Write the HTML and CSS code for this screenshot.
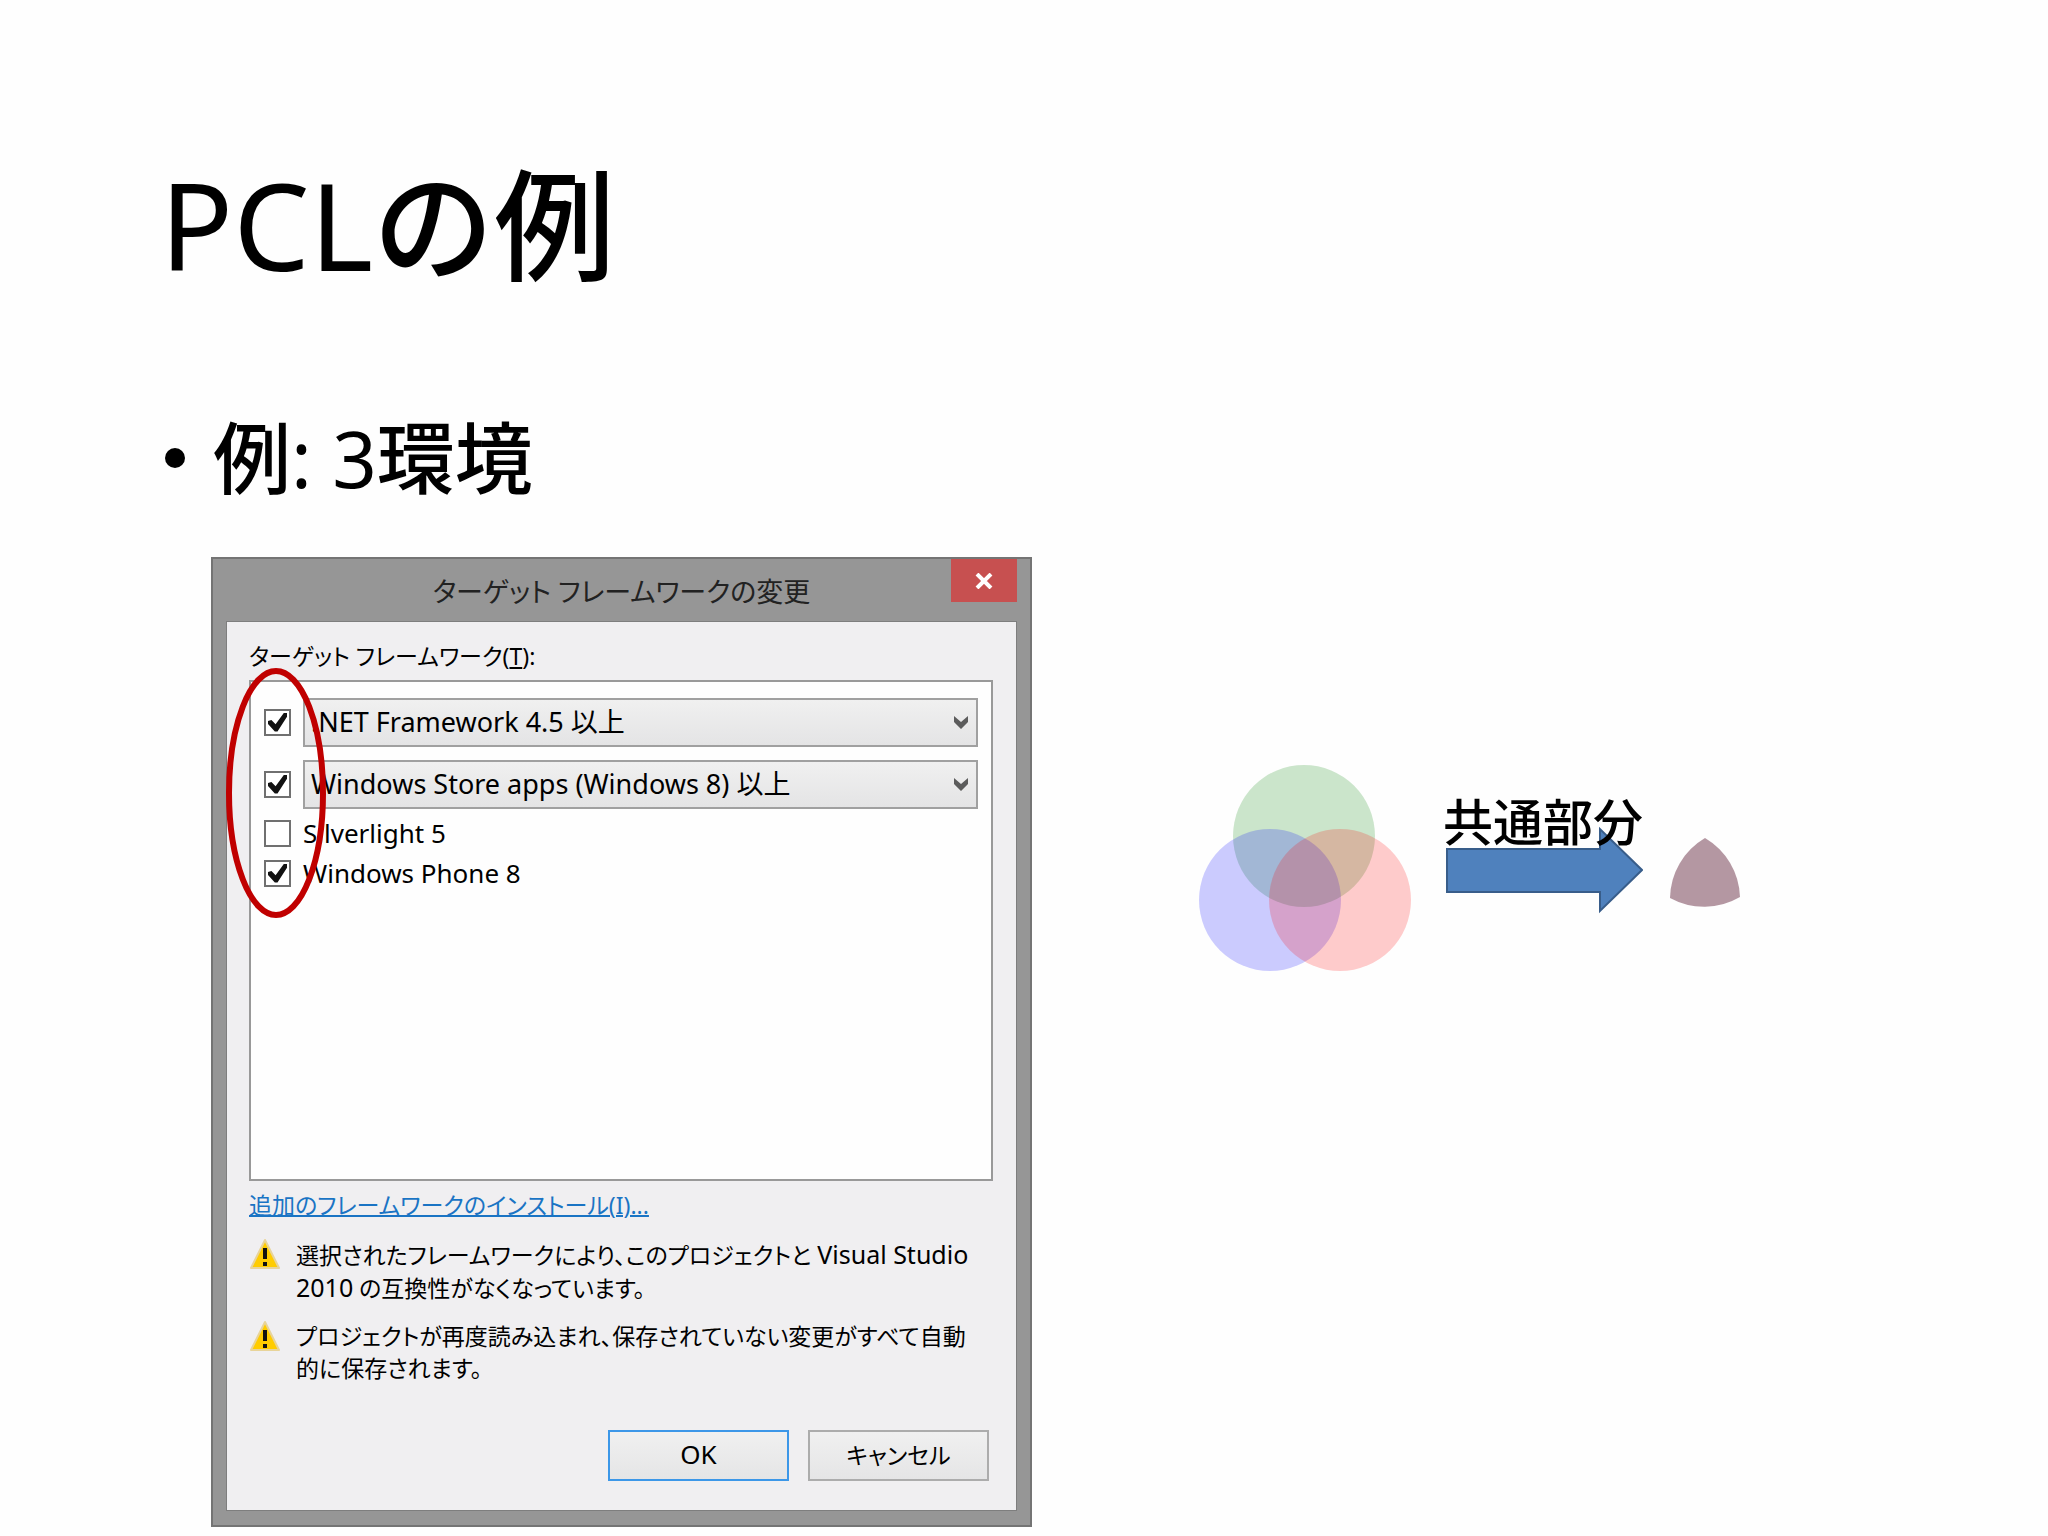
FILE: index.html
```html
<!DOCTYPE html>
<html lang="ja">
  <head>
    <meta charset="UTF-8" />
    <meta name="viewport" content="width=device-width, initial-scale=1.0" />
    <title>PCLの例</title>
    <link rel="stylesheet" href="styles.css">
  </head>
  <body>
    <main class="slide">
      <h1>PCL<span class="kanji">の例</span></h1>

      <ul class="points">
        <li><span><span class="kanji">例</span>: 3<span class="kanji">環境</span></span></li>
      </ul>

      <div class="content">
        <section class="dialog" aria-labelledby="dialog-title">
          <header class="titlebar">
            <h2 id="dialog-title">ターゲット フレームワークの変更</h2>
            <button type="button" class="close-btn" aria-label="閉じる">
              <svg viewBox="0 0 18 16" width="18" height="16">
                <path d="M2 1L16 15M16 1L2 15" stroke="#fff" stroke-width="4" fill="none" />
              </svg>
            </button>
          </header>

          <form class="client">
            <p class="list-label" id="list-label">ターゲット フレームワーク(<u>T</u>):</p>

            <div class="framework-list" role="group" aria-labelledby="list-label">
              <div class="row row-combo">
                <input type="checkbox" id="net" aria-label=".NET Framework" checked />
                <div class="combo">
                  <select id="net-version" aria-label=".NET Framework のバージョン">
                    <option>.NET Framework 4.5 以上</option>
                  </select>
                  <svg viewBox="0 0 16 13" width="16" height="13">
                    <path d="M1 0L8 6L15 0V6L8 13L1 6Z" fill="#5c5c5c" />
                  </svg>
                </div>
              </div>
              <div class="row row-combo">
                <input type="checkbox" id="store" aria-label="Windows Store apps" checked />
                <div class="combo">
                  <select id="store-version" aria-label="Windows Store apps のバージョン">
                    <option>Windows Store apps (Windows 8) 以上</option>
                  </select>
                  <svg viewBox="0 0 16 13" width="16" height="13">
                    <path d="M1 0L8 6L15 0V6L8 13L1 6Z" fill="#5c5c5c" />
                  </svg>
                </div>
              </div>
              <div class="row">
                <input type="checkbox" id="silverlight" />
                <label for="silverlight">Silverlight 5</label>
              </div>
              <div class="row">
                <input type="checkbox" id="phone" checked />
                <label for="phone">Windows Phone 8</label>
              </div>

              <svg class="marker" viewBox="0 0 100 250" width="100" height="250">
                <ellipse cx="50" cy="125" rx="47" ry="122" fill="none" stroke="#c00000" stroke-width="6" />
              </svg>
            </div>

            <a href="#" class="install-link">追加のフレームワークのインストール(I)...</a>

            <div class="warning">
              <svg viewBox="0 0 32 32" width="32" height="32">
                <path d="M16 2L30 30H2Z" fill="#fc0" stroke="#e8d49a" stroke-width="2" stroke-linejoin="round" />
                <path d="M16 10V21M16 24V28" stroke="#111" stroke-width="4" />
              </svg>
              <p>選択されたフレームワークにより、このプロジェクトと <span class="latin">Visual Studio</span><br /><span class="latin">2010</span> の互換性がなくなっています。</p>
            </div>
            <div class="warning">
              <svg viewBox="0 0 32 32" width="32" height="32">
                <path d="M16 2L30 30H2Z" fill="#fc0" stroke="#e8d49a" stroke-width="2" stroke-linejoin="round" />
                <path d="M16 10V21M16 24V28" stroke="#111" stroke-width="4" />
              </svg>
              <p>プロジェクトが再度読み込まれ、保存されていない変更がすべて自動<br />的に保存されます。</p>
            </div>

            <div class="buttons">
              <button type="button" class="btn btn-default">OK</button>
              <button type="button" class="btn">キャンセル</button>
            </div>
          </form>
        </section>

        <div class="diagram">
          <svg class="venn" viewBox="0 0 212 206" width="212" height="206">
            <circle cx="105" cy="71" r="71" fill="#008000" fill-opacity="0.2" />
            <circle cx="71" cy="135" r="71" fill="#0000ff" fill-opacity="0.2" />
            <circle cx="141" cy="135" r="71" fill="#ff0000" fill-opacity="0.2" />
          </svg>

          <div class="arrow">
            <span class="arrow-label kanji">共通部分</span>
            <svg viewBox="0 0 198 90" width="198" height="90">
              <path d="M2 24H155V4L197 45L155 86V67H2Z" fill="#4f81bd" stroke="#385d8a" stroke-width="2" />
            </svg>
          </div>

          <svg class="common" viewBox="0 0 70 69" width="70" height="69">
            <path d="M35 0A71 71 0 0 1 70 59A71 71 0 0 1 0 60A71 71 0 0 1 35 0Z" fill="#b497a2" />
          </svg>
        </div>
      </div>
    </main>
  </body>
</html>
```
FILE: styles.css
```css
* {
  box-sizing: border-box;
}

body {
  margin: 0;
  background: #fefefe;
  color: #000;
  font-family: "Noto Sans", "Noto Sans CJK JP", sans-serif;
}

h1,
h2,
p,
ul {
  margin: 0;
  padding: 0;
  font-weight: normal;
}

svg {
  display: block;
  flex: none;
}

.slide {
  padding: 144px 160px 8px;
}

.slide h1 {
  font-size: 121px;
  line-height: 160px;
}

.kanji {
  font-weight: 500;
}

.points {
  margin-top: 104px;
  list-style: none;
}

.points li {
  display: flex;
  align-items: center;
  gap: 28px;
  padding-left: 5px;
  font-size: 78px;
  line-height: 100px;
}

.points li::before {
  content: "";
  width: 20px;
  height: 20px;
  border-radius: 50%;
  background: #000;
}

.content {
  display: flex;
  align-items: flex-start;
  gap: 167px;
  margin-top: 49px;
  padding-left: 51px;
}

/* dialog */

.dialog {
  flex: 0 1 821px;
  border: 2px solid #747474;
  background: #969696;
  font-size: 23px;
  font-feature-settings: "palt";
}

.titlebar {
  position: relative;
  padding: 12px 80px 8px;
  text-align: center;
}

.titlebar h2 {
  font-size: 27px;
  line-height: 42px;
  color: #222;
}

.close-btn {
  position: absolute;
  top: 0;
  right: 13px;
  display: grid;
  place-items: center;
  width: 66px;
  height: 43px;
  padding: 0;
  border: 0;
  background: #c75050;
}

.client {
  margin: 0 13px 14px;
  padding: 14px 23px 29px 22px;
  border: 1px solid #7e7e7e;
  background: #f0eff1;
}

.list-label {
  line-height: 40px;
}

.framework-list {
  position: relative;
  min-height: 501px;
  margin-top: 4px;
  padding: 15px 13px;
  border: 2px solid #999;
  background: #fefefe;
}

.row {
  display: flex;
  align-items: center;
  gap: 12px;
  height: 40px;
  font-size: 26px;
}

.row-combo {
  height: 50px;
  margin-bottom: 12px;
}

.row-combo + .row:not(.row-combo) {
  margin-top: -8px;
}

.row input {
  appearance: none;
  flex: none;
  display: grid;
  place-items: center;
  width: 27px;
  height: 27px;
  margin: 0;
  border: 2px solid #707070;
  background: #fff;
}

.row input:checked::before {
  content: "";
  width: 19px;
  height: 19px;
  background: #111;
  clip-path: polygon(0 45%, 18% 40%, 40% 62%, 85% 0, 100% 0, 100% 22%, 50% 100%, 36% 100%, 0 60%);
}

.combo {
  position: relative;
  flex: 1;
}

.combo select {
  appearance: none;
  display: block;
  width: 100%;
  height: 49px;
  padding: 0 32px 2px 6px;
  border: 2px solid #a0a0a0;
  border-radius: 0;
  background: linear-gradient(#f0f0f0, #e4e4e5);
  color: #000;
  font: inherit;
  font-size: 27px;
}

.combo svg {
  position: absolute;
  top: 18px;
  right: 9px;
  pointer-events: none;
}

.marker {
  position: absolute;
  top: -14px;
  left: -25px;
  pointer-events: none;
}

.install-link {
  display: block;
  width: fit-content;
  margin: 4px 0 13px;
  line-height: 40px;
  color: #1a74c4;
  text-decoration-thickness: 2px;
}

.warning {
  display: flex;
  gap: 15px;
  margin-bottom: 16px;
  line-height: 32px;
  white-space: nowrap;
}

.latin {
  font-size: 25px;
}

.buttons {
  display: flex;
  justify-content: flex-end;
  gap: 19px;
  margin-top: 46px;
  padding-right: 4px;
}

.btn {
  width: 181px;
  height: 51px;
  padding: 0 0 4px;
  border: 2px solid #acacac;
  background: linear-gradient(#f0f0f0, #e5e5e6);
  color: #000;
  font: inherit;
  font-feature-settings: inherit;
}

.btn-default {
  border-color: #3c97e8;
  font-size: 26px;
}

/* diagram */

.diagram {
  display: flex;
  align-items: flex-start;
  padding-top: 208px;
}

.arrow {
  position: relative;
  margin: 60px 27px 0 34px;
}

.arrow-label {
  position: absolute;
  bottom: 63px;
  left: -2px;
  font-size: 50px;
  line-height: 60px;
  white-space: nowrap;
}

.common {
  margin-top: 73px;
}
```
